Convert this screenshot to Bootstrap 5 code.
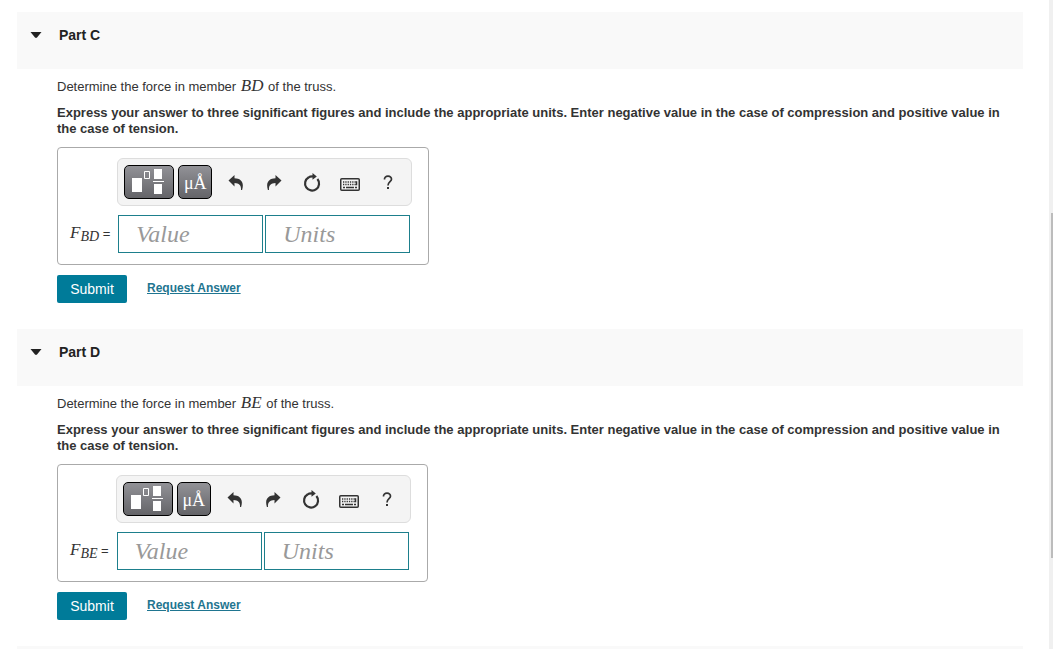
<!DOCTYPE html>
<html lang="en">
<head>
<meta charset="utf-8">
<meta name="viewport" content="width=device-width, initial-scale=1">
<title>Truss forces</title>
<link href="https://cdn.jsdelivr.net/npm/bootstrap@5.3.0/dist/css/bootstrap.min.css" rel="stylesheet">
<style>
  body { font: 13px/16px "Liberation Sans", Arial, sans-serif; color: #333; background: #fff; }
  .viewport { height: 100vh; }
  .page-scroll { padding: 12px 26px 0 17px; }
  .track { width: 4px; background: #f0f0f0; padding: 213px 0 91px 2px; }
  .thumb { background: #bcbcbc; }
  .part-head { background: #f9f9f9; min-height: 57px; padding: 13px; }
  .part-head h2 { font-size: 14px; line-height: 20px; font-weight: 700; color: #222; }
  .toggle { width: 12px; height: 20px; margin-right: 17px; color: #222; }
  .part-body { padding: 10px 20px 26px 40px; }
  .gap-under { margin-bottom: 10px; }
  .math { font-family: "Liberation Serif", "Times New Roman", serif; font-style: italic; font-size: 17px; line-height: 0; }
  p .math { padding: 0 1px; }
  .answer { width: fit-content; border: 1px solid #aaa; border-radius: 4px; padding: 10px 16px 11px 12px; display: grid; grid-template-columns: auto auto; row-gap: 9px; }
  .toolbar { grid-column: 2; width: 295px; height: 48px; background: #f4f4f4; border: 1px solid #ddd; border-radius: 6px; padding-left: 6px; }
  .dark-key { height: 34px; flex: none; border: 1px solid #000; border-radius: 5px; background: linear-gradient(#929297, #646468); color: #fff; }
  .key-template { width: 50px; margin-right: 4px; }
  .key-units { width: 34px; font: 18px/30px "Liberation Serif", serif; }
  .key-units span { display: block; padding-top: 3px; line-height: 29px; }
  .tool { width: 38px; height: 34px; color: #333; }
  .tools { margin-left: 5px; }
  .label-eq { padding-right: 7px; }
  .label-eq .math span { font-size: 14px; position: relative; top: 3px; }
  .field { width: 145px; height: 38px; border: 1px solid #1d7f8c; padding: 0 17px; font: italic 24px/36px "Liberation Serif", serif; color: #333; background: #fff; }
  .field::placeholder { color: #999; opacity: 1; }
  .fields { gap: 2px; padding-left: 1px; }
  .submit { --bs-btn-bg: #007b99; --bs-btn-color: #fff; --bs-btn-hover-bg: #00657e; --bs-btn-hover-color: #fff; width: 70px; height: 28px; border: 0; border-radius: 2px; padding: 0; font-size: 14px; line-height: 28px; }
  .request { font-size: 12px; line-height: 16px; font-weight: 700; color: #1f7590; margin: 5px 0 0 20px; }
</style>
</head>
<body>
<svg class="d-none" aria-hidden="true">
  <symbol id="i-caret" viewBox="0 0 12 20"><path d="M0.500 7h11L7 12.600q-1 .9-2 0z" fill="currentColor"/></symbol>
  <symbol id="i-template" viewBox="0 0 48 32"><path d="M7 12h10v14H7zM29 3h8v10h-8zM29 18h8v10h-8zM28 15h11v1H28z" fill="#fff"/><path d="M19.500 5.500h5v7h-5z" fill="none" stroke="#fff"/></symbol>
  <symbol id="i-undo" viewBox="0 0 16 16"><path d="M0.500 5.500 6.500 0v3.300c6.500.2 10 4 7.600 11.600H13C13.300 10.500 11.500 8.200 6.500 8V11.500z" fill="currentColor"/></symbol>
  <symbol id="i-reset" viewBox="0 0 18 20"><path d="M5.500 4.500A7 7 0 1 0 14.400 6" fill="none" stroke="currentColor" stroke-width="2.200"/><path d="M4.800 3.700Q6.500 2.300 9.500 2.300V0l4.300 3.600L9.500 6.800V4.500Q7 4.500 5.500 5.700z" fill="currentColor"/></symbol>
  <symbol id="i-keyboard" viewBox="0 0 20 13"><rect x=".75" y=".75" width="18.500" height="11.500" rx="1" fill="none" stroke="currentColor" stroke-width="1.500"/><path d="M3 4h14M3 6.500h14" stroke="currentColor" stroke-width="1.500" stroke-dasharray="1.300 1"/><path d="M3 9.500h2m1 0h8m1 0h2M16.500 3.300v4" stroke="currentColor" stroke-width="1.500"/></symbol>
  <symbol id="i-help" viewBox="0 0 10 16"><path d="M1.500 4.500C1.300 2.300 2.800 1.200 5 1.200S8.600 2.500 8.500 4.200C8.400 6.600 5 6.900 5 10.500" fill="none" stroke="currentColor" stroke-width="1.700"/><path d="M4 12h2v2H4z" fill="currentColor"/></symbol>
</svg>

<div class="viewport d-flex overflow-hidden">
  <main class="page-scroll flex-grow-1 overflow-hidden">
    <section>
      <header class="part-head d-flex align-items-start">
        <button type="button" class="toggle btn p-0 border-0 d-flex" aria-label="Collapse Part C"><svg width="12" height="20"><use href="#i-caret"/></svg></button>
        <h2 class="m-0">Part C</h2>
      </header>
      <div class="part-body">
        <p class="gap-under">Determine the force in member <span class="math">BD</span> of the truss.</p>
        <p class="gap-under fw-bold">Express your answer to three significant figures and include the appropriate units. Enter negative value in the case of compression and positive value in the case of tension.</p>
        <div class="answer gap-under">
          <div class="toolbar d-flex align-items-center" role="toolbar" aria-label="Math tools">
            <button type="button" class="dark-key key-template p-0" aria-label="Templates"><svg class="d-block" width="48" height="32"><use href="#i-template"/></svg></button>
            <button type="button" class="dark-key key-units p-0" aria-label="Unit symbols"><span>μÅ</span></button>
            <div class="tools d-flex">
              <button type="button" class="tool btn p-0 border-0" aria-label="Undo"><svg width="16" height="16"><use href="#i-undo"/></svg></button>
              <button type="button" class="tool btn p-0 border-0" aria-label="Redo"><svg width="16" height="16" viewBox="0 0 16 16"><use href="#i-undo" transform="matrix(-1 0 0 1 16 0)"/></svg></button>
              <button type="button" class="tool btn p-0 border-0" aria-label="Reset"><svg width="18" height="20"><use href="#i-reset"/></svg></button>
              <button type="button" class="tool btn p-0 border-0 pt-1" aria-label="Keyboard shortcuts"><svg width="20" height="13"><use href="#i-keyboard"/></svg></button>
              <button type="button" class="tool btn p-0 border-0" aria-label="Help"><svg width="10" height="16"><use href="#i-help"/></svg></button>
            </div>
          </div>
          <label class="label-eq align-self-center" for="value-c"><span class="math">F<span>BD</span></span> =</label>
          <div class="fields d-flex">
            <input class="field" id="value-c" type="text" placeholder="Value">
            <input class="field" type="text" placeholder="Units" aria-label="Units for Part C">
          </div>
        </div>
        <div class="d-flex align-items-start">
          <button type="button" class="submit btn">Submit</button>
          <a class="request" href="#request-c">Request Answer</a>
        </div>
      </div>
    </section>

    <section>
      <header class="part-head d-flex align-items-start">
        <button type="button" class="toggle btn p-0 border-0 d-flex" aria-label="Collapse Part D"><svg width="12" height="20"><use href="#i-caret"/></svg></button>
        <h2 class="m-0">Part D</h2>
      </header>
      <div class="part-body">
        <p class="gap-under">Determine the force in member <span class="math">BE</span> of the truss.</p>
        <p class="gap-under fw-bold">Express your answer to three significant figures and include the appropriate units. Enter negative value in the case of compression and positive value in the case of tension.</p>
        <div class="answer gap-under">
          <div class="toolbar d-flex align-items-center" role="toolbar" aria-label="Math tools">
            <button type="button" class="dark-key key-template p-0" aria-label="Templates"><svg class="d-block" width="48" height="32"><use href="#i-template"/></svg></button>
            <button type="button" class="dark-key key-units p-0" aria-label="Unit symbols"><span>μÅ</span></button>
            <div class="tools d-flex">
              <button type="button" class="tool btn p-0 border-0" aria-label="Undo"><svg width="16" height="16"><use href="#i-undo"/></svg></button>
              <button type="button" class="tool btn p-0 border-0" aria-label="Redo"><svg width="16" height="16" viewBox="0 0 16 16"><use href="#i-undo" transform="matrix(-1 0 0 1 16 0)"/></svg></button>
              <button type="button" class="tool btn p-0 border-0" aria-label="Reset"><svg width="18" height="20"><use href="#i-reset"/></svg></button>
              <button type="button" class="tool btn p-0 border-0 pt-1" aria-label="Keyboard shortcuts"><svg width="20" height="13"><use href="#i-keyboard"/></svg></button>
              <button type="button" class="tool btn p-0 border-0" aria-label="Help"><svg width="10" height="16"><use href="#i-help"/></svg></button>
            </div>
          </div>
          <label class="label-eq align-self-center" for="value-d"><span class="math">F<span>BE</span></span> =</label>
          <div class="fields d-flex">
            <input class="field" id="value-d" type="text" placeholder="Value">
            <input class="field" type="text" placeholder="Units" aria-label="Units for Part D">
          </div>
        </div>
        <div class="d-flex align-items-start">
          <button type="button" class="submit btn">Submit</button>
          <a class="request" href="#request-d">Request Answer</a>
        </div>
      </div>
    </section>
    <div class="part-head"></div>
  </main>
  <div class="track d-flex flex-column" aria-hidden="true"><div class="thumb flex-grow-1"></div></div>
</div>
<script src="https://cdn.jsdelivr.net/npm/bootstrap@5.3.0/dist/js/bootstrap.bundle.min.js"></script>
</body>
</html>
